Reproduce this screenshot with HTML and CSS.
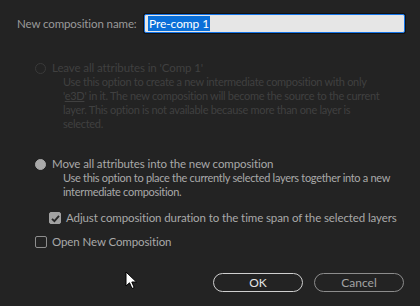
FILE: index.html
```html
<!DOCTYPE html>
<html>
<head>
    <title>Pre-compose</title>
    <link rel="stylesheet" href="styles.css">
</head>
<body>
    <div class="dialog">
        <div class="name-row">
            <label class="name-label">New composition name:</label>
            <div class="name-input"><span class="selected-text">Pre-comp 1</span></div>
        </div>

        <div class="options">
            <!-- Leave attributes (disabled) -->
            <div class="option disabled">
                <div class="option-title">
                    <span class="radio"></span>
                    <span>Leave all attributes in 'Comp 1'</span>
                </div>
                <div class="option-desc">
                    Use this option to create a new intermediate composition with only<br>
                    '<span class="layer-name">e3D</span>' in it. The new composition will become the source to the current<br>
                    layer. This option is not available because more than one layer is<br>
                    selected.
                </div>
            </div>

            <!-- Move attributes -->
            <div class="option last">
                <div class="option-title">
                    <span class="radio checked"></span>
                    <span>Move all attributes into the new composition</span>
                </div>
                <div class="option-desc">
                    Use this option to place the currently selected layers together into a new<br>
                    intermediate composition.
                </div>
                <div class="check-row sub">
                    <span class="checkbox checked">
                        <svg width="13" height="13" viewBox="0 0 13 13"><path d="M3 6.8 L5.4 9.2 L10 3.8" fill="none" stroke="#262626" stroke-width="1.8"/></svg>
                    </span>
                    <span>Adjust composition duration to the time span of the selected layers</span>
                </div>
            </div>

            <div class="check-row">
                <span class="checkbox"></span>
                <span>Open New Composition</span>
            </div>
        </div>

        <div class="buttons">
            <button class="btn primary">OK</button>
            <button class="btn">Cancel</button>
        </div>

        <svg class="cursor" width="14" height="20" viewBox="0 0 14 20">
            <path d="M1 1 L1 15 L4.5 11.8 L7 17.5 L9.2 16.5 L6.8 11 L11.5 11 Z" fill="#fff" stroke="#000" stroke-width="1"/>
        </svg>
    </div>
</body>
</html>
```

FILE: styles.css
```css
:root {
    --bg: #232323;
    --text: #a9a9a9;
    --label: #9a9a9a;
    --disabled: #404040;
    --accent: #1473e6;
}

body {
    margin: 0;
    background: var(--bg);
    font-family: 'Lato', sans-serif;
    font-size: 11.5px;
    letter-spacing: -0.1px;
    color: var(--text);
    white-space: nowrap;
}

.dialog {
    position: relative;
    width: 420px;
    height: 306px;
    overflow: hidden;
}

.name-row {
    display: flex;
    align-items: center;
    padding: 14px 0 0 17px;
}

.name-label {
    width: 127px;
    font-size: 11.5px;
    color: var(--label);
}

.name-input {
    width: 256px;
    height: 17px;
    padding: 0 0 0 3px;
    background: #e6e6e6;
    border: 1px solid var(--accent);
    border-radius: 2px;
    box-shadow: 0 0 0 1px #111;
    display: flex;
    align-items: center;
}

.selected-text {
    background: #0a6fd8;
    color: #fff;
    font-size: 12px;
    line-height: 15px;
    padding: 0 1px;
}

.options {
    display: flex;
    flex-direction: column;
    padding: 28px 0 0 35px;
    line-height: 14px;
}

.option {
    display: flex;
    flex-direction: column;
    margin-bottom: 26px;
}

.option.last {
    margin-bottom: 10px;
}

.option-title {
    display: flex;
    align-items: center;
    gap: 6px;
}

.option-desc {
    padding-left: 28px;
    font-size: 11px;
    letter-spacing: -0.3px;
}

.disabled {
    color: var(--disabled);
}

.layer-name {
    text-decoration: underline;
}

.radio {
    width: 9px;
    height: 9px;
    border: 1.5px solid #a9a9a9;
    border-radius: 50%;
    flex-shrink: 0;
}

.disabled .radio {
    border-color: #3a3a3a;
}

.radio.checked {
    background: #a9a9a9;
}

.check-row {
    display: flex;
    align-items: center;
    gap: 5px;
}

.check-row.sub {
    margin-top: 12px;
    padding-left: 14px;
}

.checkbox {
    width: 10px;
    height: 10px;
    border: 1.5px solid #8e8e8e;
    border-radius: 2px;
    flex-shrink: 0;
    display: flex;
}

.checkbox.checked {
    background: #a2a2a2;
    border-color: #a2a2a2;
}

.checkbox svg {
    margin: -1.5px;
}

.buttons {
    display: flex;
    justify-content: flex-end;
    gap: 11px;
    padding: 24px 16px 0 0;
}

.btn {
    width: 90px;
    height: 19px;
    padding: 0;
    background: transparent;
    border: 1.5px solid #8c8c8c;
    border-radius: 10px;
    color: #a3a3a3;
    font-family: 'Lato', sans-serif;
    font-size: 12px;
    line-height: 15px;
}

.btn.primary {
    border-color: #cfcfcf;
    color: #e4e4e4;
}

.cursor {
    position: absolute;
    left: 125px;
    top: 271px;
}
```
